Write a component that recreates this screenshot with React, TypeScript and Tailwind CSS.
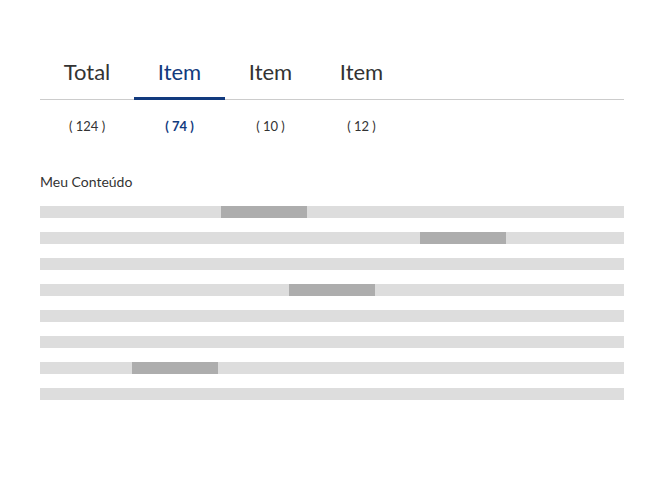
import React from "react";

const tabs = [
  { label: "Total", count: "( 124 )", w: 94 },
  { label: "Item", count: "( 74 )", active: true, w: 91 },
  { label: "Item", count: "( 10 )", w: 91 },
  { label: "Item", count: "( 12 )", w: 91 },
];

const bars: (null | { left: number })[] = [
  { left: 181 },
  { left: 380 },
  null,
  { left: 249 },
  null,
  null,
  { left: 92 },
  null,
];

export default function App() {
  return (
    <div
      className="w-[664px] h-[480px] bg-white px-10 pt-[56px]"
      style={{ fontFamily: "Lato, 'Open Sans', sans-serif" }}
    >
      <div className="flex border-b border-[#cccccc]">
        {tabs.map((t, i) => (
          <div
            key={i}
            className={
              "h-[44px] flex items-start justify-center text-[22px] leading-[32px] border-b-[3px] -mb-px " +
              (t.active ? "text-[#123a7e] border-[#123a7e]" : "text-[#333333] border-transparent")
            }
            style={{ width: t.w }}
          >
            {t.label}
          </div>
        ))}
      </div>
      <div className="flex mt-[17px]">
        {tabs.map((t, i) => (
          <div
            key={i}
            className={
              "flex justify-center text-[13px] leading-[18px] " +
              (t.active ? "text-[#123a7e] font-bold" : "text-[#333333]")
            }
            style={{ width: t.w }}
          >
            {t.count}
          </div>
        ))}
      </div>
      <div className="mt-[38px] text-[14px] leading-[18px] text-[#333333]">Meu Conteúdo</div>
      <div className="mt-[15px] flex flex-col gap-[14px]">
        {bars.map((b, i) => (
          <div key={i} className="relative h-[12px] bg-[#dddddd]">
            {b && (
              <div
                className="absolute top-0 h-[12px] w-[86px] bg-[#adadad]"
                style={{ left: b.left }}
              />
            )}
          </div>
        ))}
      </div>
    </div>
  );
}
